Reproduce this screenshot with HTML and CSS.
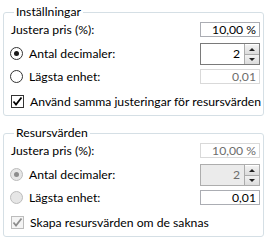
FILE: index.html
```html
<!DOCTYPE html>
<html lang="sv">
<head>
    <meta charset="UTF-8">
    <title>Inställningar</title>
    <link rel="stylesheet" href="styles.css">
</head>
<body>
    <fieldset class="group">
        <legend>Inställningar</legend>
        <div class="row row-first">
            <span class="label">Justera pris (%):</span>
            <div class="field">10,00 %</div>
        </div>
        <div class="row row-spin">
            <span class="label"><span class="radio checked"></span>Antal decimaler:</span>
            <div class="spin">
                <div class="spin-value">2</div>
                <div class="spin-buttons">
                    <span class="spin-btn up"></span>
                    <span class="spin-btn down"></span>
                </div>
            </div>
        </div>
        <div class="row row-third">
            <span class="label"><span class="radio"></span>Lägsta enhet:</span>
            <div class="field disabled">0,01</div>
        </div>
        <div class="row row-check">
            <span class="label">
                <span class="check">
                    <svg width="11" height="11" viewBox="0 0 11 11"><path d="M1.5 5.5 L4 8.5 L9.5 1.5" fill="none" stroke="#000" stroke-width="1.8"/></svg>
                </span>Använd samma justeringar för resursvärden
            </span>
        </div>
    </fieldset>

    <fieldset class="group second">
        <legend>Resursvärden</legend>
        <div class="row row-first">
            <span class="label">Justera pris (%):</span>
            <div class="field disabled">10,00 %</div>
        </div>
        <div class="row row-spin">
            <span class="label"><span class="radio checked off"></span>Antal decimaler:</span>
            <div class="spin off">
                <div class="spin-value">2</div>
                <div class="spin-buttons">
                    <span class="spin-btn up"></span>
                    <span class="spin-btn down"></span>
                </div>
            </div>
        </div>
        <div class="row row-third">
            <span class="label"><span class="radio off"></span>Lägsta enhet:</span>
            <div class="field">0,01</div>
        </div>
        <div class="row row-check">
            <span class="label">
                <span class="check off">
                    <svg width="11" height="11" viewBox="0 0 11 11"><path d="M1.5 5.5 L4 8.5 L9.5 1.5" fill="none" stroke="#8c8c8c" stroke-width="1.8"/></svg>
                </span>Skapa resursvärden om de saknas
            </span>
        </div>
    </fieldset>
</body>
</html>
```

FILE: styles.css
```css
body {
    margin: 0;
    padding: 4px 0 0 3px;
    font-family: Lato, sans-serif;
    font-size: 12.2px;
    color: #000;
    background-color: #fff;
}

.group {
    box-sizing: border-box;
    width: 261px;
    min-width: 0;
    margin: 0;
    padding: 0 3px 6px 7px;
    border: 1px solid #d5dfe5;
    border-radius: 3px;
}

.group.second {
    margin-top: 9px;
}

.group legend {
    padding: 0 2px;
    margin-left: 3px;
    line-height: 16px;
}

.row {
    display: flex;
    align-items: center;
    justify-content: space-between;
    height: 15px;
}

.row-first {
    margin-top: 2px;
}

.row-spin {
    height: 21px;
    margin-top: 6px;
}

.row-third {
    margin-top: 5px;
}

.row-check {
    height: 16px;
    margin-top: 9px;
}

.label {
    display: flex;
    align-items: center;
    white-space: nowrap;
}

.field {
    box-sizing: border-box;
    width: 60px;
    height: 15px;
    border: 1px solid #abadb3;
    text-align: right;
    padding-right: 3px;
    line-height: 13px;
}

.field.disabled {
    border-color: #d9d9d9;
    color: #6d6d6d;
}

.radio {
    box-sizing: border-box;
    width: 13px;
    height: 13px;
    border: 1px solid #333;
    border-radius: 50%;
    margin: 0 6px 0 -1px;
    display: flex;
    align-items: center;
    justify-content: center;
    background-color: #fff;
}

.radio.checked::after {
    content: "";
    width: 5px;
    height: 5px;
    border-radius: 50%;
    background-color: #1a1a1a;
}

.radio.off {
    border-color: #bcbcbc;
    background-color: #e6e6e6;
}

.radio.checked.off::after {
    background-color: #8c8c8c;
}

.check {
    box-sizing: border-box;
    width: 13px;
    height: 13px;
    border: 1px solid #333;
    margin: 0 6px 0 0;
    display: flex;
    align-items: center;
    justify-content: center;
    background-color: #fff;
}

.check.off {
    border-color: #bcbcbc;
    background-color: #f4f4f4;
}

.spin {
    box-sizing: border-box;
    width: 60px;
    height: 22px;
    display: flex;
    border: 1px solid #7a7a7a;
}

.spin-value {
    flex: 1;
    text-align: right;
    padding-right: 4px;
    line-height: 20px;
}

.spin-buttons {
    width: 14px;
    display: flex;
    flex-direction: column;
    border-left: 1px solid #acacac;
}

.spin-btn {
    flex: 1;
    display: flex;
    align-items: center;
    justify-content: center;
    background: linear-gradient(#f2f2f2, #dcdcdc);
    border-top: 1px solid #fff;
}

.spin-btn.down {
    border-top: 1px solid #acacac;
}

.spin-btn::after {
    content: "";
    border-left: 3px solid transparent;
    border-right: 3px solid transparent;
}

.spin-btn.up::after {
    border-bottom: 3px solid #222;
}

.spin-btn.down::after {
    border-top: 3px solid #222;
}

.spin.off {
    border-color: #adadad;
}

.spin.off .spin-value {
    background-color: #ebebeb;
    color: #6d6d6d;
}
```
